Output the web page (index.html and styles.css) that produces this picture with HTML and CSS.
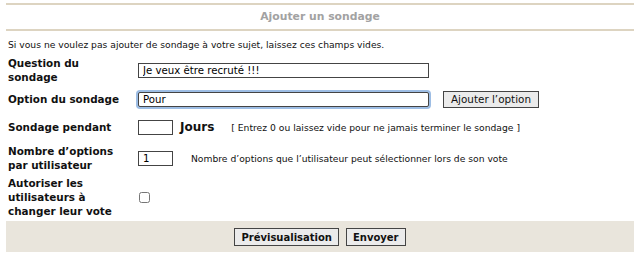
FILE: index.html
```html
<!doctype html>
<html lang="fr">
<head>
  <meta charset="UTF-8">
  <title>Ajouter un sondage</title>
  <link rel="stylesheet" href="styles.css">
</head>
<body>
  <div class="panel">
    <h3 class="panel-title">Ajouter un sondage</h3>
    <p class="intro">Si vous ne voulez pas ajouter de sondage à votre sujet, laissez ces champs vides.</p>

    <div class="poll-form">
      <label class="poll-label" for="pollQuestion">Question du sondage</label>
      <div class="poll-field">
        <input type="text" id="pollQuestion" class="text-wide" value="Je veux être recruté !!!">
      </div>

      <label class="poll-label" for="pollOption">Option du sondage</label>
      <div class="poll-field">
        <input type="text" id="pollOption" class="text-wide focused" value="Pour">
        <button class="btn btn-add">Ajouter l’option</button>
      </div>

      <label class="poll-label" for="pollLength">Sondage pendant</label>
      <div class="poll-field">
        <input type="text" id="pollLength" class="text-small">
        <span class="unit">Jours</span>
        <span class="hint">[ Entrez 0 ou laissez vide pour ne jamais terminer le sondage ]</span>
      </div>

      <label class="poll-label" for="pollMax">Nombre d’options par utilisateur</label>
      <div class="poll-field">
        <input type="text" id="pollMax" class="text-small" value="1">
        <span class="hint hint-wide">Nombre d’options que l’utilisateur peut sélectionner lors de son vote</span>
      </div>

      <label class="poll-label" for="pollChange">Autoriser les utilisateurs à changer leur vote</label>
      <div class="poll-field">
        <input type="checkbox" id="pollChange" class="check">
      </div>
    </div>

    <div class="actions">
      <button class="btn btn-bold">Prévisualisation</button>
      <button class="btn btn-bold">Envoyer</button>
    </div>
  </div>
</body>
</html>
```

FILE: styles.css
```css
body {
  margin: 0;
  background: #fff;
  font-family: 'DejaVu Sans', Verdana, sans-serif;
  color: #111;
}

.panel {
  margin: 3px 6px 0 6px;
}

.panel-title {
  margin: 0;
  height: 24px;
  line-height: 24px;
  border-top: 2px solid #ddd4c1;
  border-bottom: 2px solid #ddd4c1;
  text-align: center;
  font-size: 10.8px;
  font-weight: bold;
  color: #a2a2a2;
}

.intro {
  margin: 8px 0 0 2px;
  font-size: 9.2px;
  line-height: 12px;
}

.poll-form {
  display: grid;
  grid-template-columns: 130px 1fr;
  grid-template-rows: 34px 24px 32px 30px 48px;
  align-items: center;
  margin: 2px 0 0 2px;
}

.poll-label {
  font-size: 10.4px;
  font-weight: bold;
  line-height: 14px;
  padding-right: 7px;
}

.poll-field {
  display: flex;
  align-items: center;
}

input[type="text"] {
  box-sizing: border-box;
  height: 15px;
  padding: 0 4px;
  border: 1px solid #444;
  font-family: inherit;
  font-size: 10.2px;
  color: #000;
}

.text-wide {
  width: 291px;
}

.focused {
  height: 16px;
  border-color: #6e8fb8;
  border-radius: 2px;
  box-shadow: 0 0 0 2px #9dbde4;
  outline: none;
}

.text-small {
  width: 35px;
}

.unit {
  margin-left: 7px;
  font-size: 12px;
  font-weight: bold;
}

.hint {
  margin-left: 17px;
  font-size: 9.2px;
}

.hint-wide {
  margin-left: 18px;
}

.check {
  margin: 0 0 0 1px;
  width: 11px;
  height: 11px;
}

.btn {
  box-sizing: border-box;
  height: 18px;
  padding: 0 6px;
  border: 1px solid #444;
  background: #ebebeb;
  font-family: inherit;
  font-size: 10px;
  color: #111;
}

.btn-add {
  height: 17px;
  margin-left: 14px;
  padding: 0 7px;
  font-size: 10.4px;
}

.actions {
  display: flex;
  justify-content: center;
  gap: 7px;
  padding: 7px 0 6px;
  background: #e9e5dc;
}

.btn-bold {
  font-weight: bold;
  padding: 0 6px;
}
```
